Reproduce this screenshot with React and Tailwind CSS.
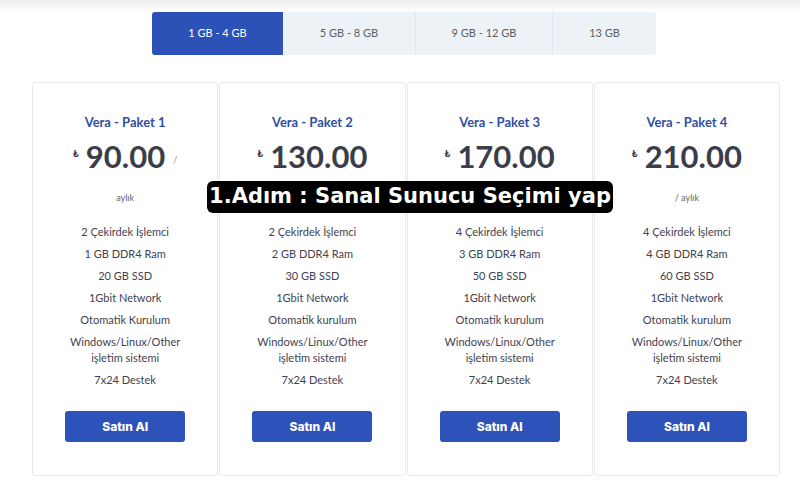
const tabs = [
  { label: "1 GB - 4 GB", w: "w-[131px]", active: true },
  { label: "5 GB - 8 GB", w: "w-[132px]" },
  { label: "9 GB - 12 GB", w: "w-[137px]" },
  { label: "13 GB", w: "w-[104px]" },
];

const plans = [
  {
    name: "Vera - Paket 1",
    price: "90.00",
    slashInline: true,
    features: ["2 Çekirdek İşlemci", "1 GB DDR4 Ram", "20 GB SSD", "1Gbit Network", "Otomatik Kurulum"],
  },
  {
    name: "Vera - Paket 2",
    price: "130.00",
    features: ["2 Çekirdek İşlemci", "2 GB DDR4 Ram", "30 GB SSD", "1Gbit Network", "Otomatik kurulum"],
  },
  {
    name: "Vera - Paket 3",
    price: "170.00",
    features: ["4 Çekirdek İşlemci", "3 GB DDR4 Ram", "50 GB SSD", "1Gbit Network", "Otomatik kurulum"],
  },
  {
    name: "Vera - Paket 4",
    price: "210.00",
    features: ["4 Çekirdek İşlemci", "4 GB DDR4 Ram", "60 GB SSD", "1Gbit Network", "Otomatik kurulum"],
  },
];

function PlanCard({ plan }) {
  return (
    <div className="flex flex-col items-center rounded-[3px] border border-[#e6e9ee] bg-white pt-[31px] pb-[33px]">
      <h3 className="text-[13px] font-bold leading-4 text-[#2f4fa6]">{plan.name}</h3>
      <div className="mt-[8px] flex h-9 items-center text-[#3b3d4a]">
        <span className="mr-[7px] -mt-[6px] text-[10px] font-bold">₺</span>
        <span className="text-[31px] font-bold leading-9">{plan.price}</span>
        {plan.slashInline && <span className="ml-[8px] mt-[8px] text-[9px] text-[#888]">/</span>}
      </div>
      <div className="mt-[16px] text-[9px] leading-4 text-[#666]">
        {plan.slashInline ? "aylık" : "/ aylık"}
      </div>
      {/* features */}
      <ul className="mt-[18px] flex flex-col items-center gap-[6px] text-center text-[11px] leading-4 text-[#3f4250]">
        {plan.features.map((f) => (
          <li key={f}>{f}</li>
        ))}
        <li>
          Windows/Linux/Other
          <br />
          işletim sistemi
        </li>
        <li>7x24 Destek</li>
      </ul>
      <button className="mt-[23px] h-[31px] w-[120px] rounded-[3px] bg-[#2d52b9] text-[12px] font-extrabold text-white [font-family:Inter,sans-serif]">
        Satın Al
      </button>
    </div>
  );
}

export default function App() {
  return (
    <div className="relative h-[500px] w-[800px] overflow-hidden bg-white [font-family:Lato,'Open_Sans',sans-serif]">
      <div className="h-3 bg-gradient-to-b from-[#ededed] to-white" />

      {/* Tabs */}
      <div className="ml-[152px] flex h-[43px] w-[504px] overflow-hidden rounded-[3px] bg-[#edf2f6]">
        {tabs.map((t, i) => (
          <div
            key={t.label}
            className={`${t.w} flex items-center justify-center text-[11px] ${
              t.active ? "bg-[#2c51b7] text-white" : "text-[#5a5f66]"
            } ${i > 1 ? "border-l border-[#dfe6ec]" : ""}`}
          >
            {t.label}
          </div>
        ))}
      </div>

      {/* Cards */}
      <div className="ml-[32px] mt-[27px] grid w-[748px] grid-cols-4 gap-[1px]">
        {plans.map((p) => (
          <PlanCard key={p.name} plan={p} />
        ))}
      </div>

      {/* Caption overlay */}
      <div className="absolute left-[207px] top-[181px] flex h-[32px] w-[406px] items-center justify-center rounded-[6px] bg-black text-[21px] font-bold text-white [font-family:'DejaVu_Sans',sans-serif]">
        1.Adım : Sanal Sunucu Seçimi yap
      </div>
    </div>
  );
}
